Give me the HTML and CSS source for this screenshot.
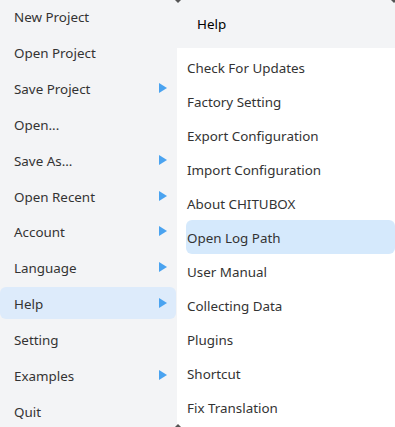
FILE: index.html
```html
<!DOCTYPE html>
<html lang="en">
<head>
  <meta charset="UTF-8" />
  <title>CHITUBOX – Menu</title>
  <link rel="stylesheet" href="styles.css">
</head>
<body>
  <div class="menu-frame">
    <!-- Hauptmenü -->
    <ul class="main-menu">
      <li class="menu-item">New Project</li>
      <li class="menu-item">Open Project</li>
      <li class="menu-item has-sub">Save Project</li>
      <li class="menu-item">Open...</li>
      <li class="menu-item has-sub">Save As...</li>
      <li class="menu-item has-sub">Open Recent</li>
      <li class="menu-item has-sub">Account</li>
      <li class="menu-item has-sub">Language</li>
      <li class="menu-item has-sub active">Help</li>
      <li class="menu-item">Setting</li>
      <li class="menu-item has-sub">Examples</li>
      <li class="menu-item">Quit</li>
    </ul>

    <!-- Untermenü Help -->
    <div class="sub-column">
      <div class="sub-title">Help</div>
      <ul class="sub-menu">
        <li class="sub-item">Check For Updates</li>
        <li class="sub-item">Factory Setting</li>
        <li class="sub-item">Export Configuration</li>
        <li class="sub-item">Import Configuration</li>
        <li class="sub-item">About CHITUBOX</li>
        <li class="sub-item hover">Open Log Path</li>
        <li class="sub-item">User Manual</li>
        <li class="sub-item">Collecting Data</li>
        <li class="sub-item">Plugins</li>
        <li class="sub-item">Shortcut</li>
        <li class="sub-item">Fix Translation</li>
      </ul>
    </div>

    <span class="scroll-mark top-left"></span>
    <span class="scroll-mark top-right"></span>
    <span class="scroll-mark bottom-left"></span>
  </div>
</body>
</html>
```

FILE: styles.css
```css
body {
  margin: 0;
  font-family: 'Noto Sans', 'Open Sans', sans-serif;
  font-size: 13.4px;
  background: #f3f4f6;
  color: #333;
  overflow: hidden;
}

.menu-frame {
  position: relative;
  display: flex;
  width: 395px;
  height: 427px;
}

ul {
  list-style: none;
  margin: 0;
  padding: 0;
}

.main-menu {
  width: 177px;
  display: flex;
  flex-direction: column;
  gap: 3px;
}

.menu-item {
  height: 33px;
  width: 176px;
  box-sizing: border-box;
  padding: 2px 9px 0 14px;
  display: flex;
  align-items: center;
  border-radius: 6px;
}

.menu-item.has-sub::after {
  content: "";
  margin: -2px 0 0 auto;
  border-left: 8px solid #4aa3f0;
  border-top: 5px solid transparent;
  border-bottom: 5px solid transparent;
}

.menu-item.active {
  background: #ddebfb;
}

.sub-column {
  flex: 1;
  display: flex;
  flex-direction: column;
}

.sub-title {
  height: 48px;
  display: flex;
  align-items: center;
  padding-left: 20px;
  color: #000;
}

.sub-menu {
  flex: 1;
  background: #fff;
  padding: 2px 0 0 9px;
}

.sub-item {
  height: 34px;
  box-sizing: border-box;
  display: flex;
  align-items: center;
  padding: 2px 0 0 1px;
  border-radius: 6px;
}

.sub-item.hover {
  background: #d5e9fc;
}

/* kleine Scroll-Pfeile an den Rändern */
.scroll-mark {
  position: absolute;
  width: 0;
  height: 0;
  border-left: 3px solid transparent;
  border-right: 3px solid transparent;
}

.scroll-mark.top-left {
  top: 0;
  left: 175px;
  border-top: 3px solid #555;
}

.scroll-mark.top-right {
  top: 0;
  right: -2px;
  border-top: 3px solid #555;
}

.scroll-mark.bottom-left {
  bottom: 0;
  left: 175px;
  border-bottom: 3px solid #555;
}
```
